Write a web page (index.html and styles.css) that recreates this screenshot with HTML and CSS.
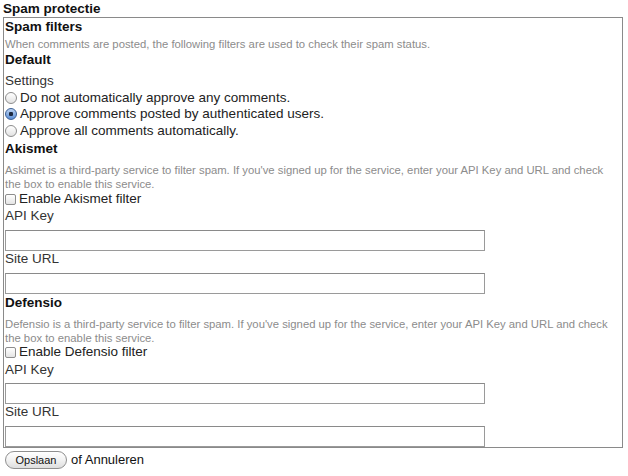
FILE: index.html
```html
<!DOCTYPE html>
<html>
<head>
<meta charset="utf-8">
<link rel="stylesheet" href="styles.css">
</head>
<body>
<div class="page">
  <div class="title">Spam protectie</div>
  <div class="box">
    <h3 class="heading">Spam filters</h3>
    <p class="desc desc-first">When comments are posted, the following filters are used to check their spam status.</p>
    <h3 class="heading">Default</h3>
    <div class="label label-settings">Settings</div>
    <label class="opt"><input type="radio" name="mode" class="radio"><span>Do not automatically approve any comments.</span></label>
    <label class="opt"><input type="radio" name="mode" class="radio" checked><span>Approve comments posted by authenticated users.</span></label>
    <label class="opt"><input type="radio" name="mode" class="radio"><span>Approve all comments automatically.</span></label>

    <h3 class="heading section-head">Akismet</h3>
    <p class="desc">Askimet is a third-party service to filter spam. If you've signed up for the service, enter your API Key and URL and check<br>the box to enable this service.</p>
    <label class="check"><input type="checkbox" class="cb"><span>Enable Akismet filter</span></label>
    <div class="label label-key">API Key</div>
    <input type="text" class="field field-first">
    <div class="label">Site URL</div>
    <input type="text" class="field">

    <h3 class="heading">Defensio</h3>
    <p class="desc">Defensio is a third-party service to filter spam. If you've signed up for the service, enter your API Key and URL and check<br>the box to enable this service.</p>
    <label class="check"><input type="checkbox" class="cb"><span>Enable Defensio filter</span></label>
    <div class="label label-key">API Key</div>
    <input type="text" class="field field-first">
    <div class="label">Site URL</div>
    <input type="text" class="field">
  </div>
  <div class="actions"><button type="button" class="btn">Opslaan</button><span class="or">of Annuleren</span></div>
</div>
</body>
</html>
```

FILE: styles.css
```css
html, body {
  margin: 0;
  padding: 0;
  background: #ffffff;
}
body {
  font-family: "Liberation Sans", Arial, Helvetica, sans-serif;
  font-size: 13.5px;
  color: #333333;
}
.page {
  padding: 0 5px 0 3px;
}
.title {
  font-weight: bold;
  font-size: 13.5px;
  line-height: 17px;
  color: #111111;
}
.box {
  border: 1px solid #8a8a8a;
  padding: 0 1px;
  display: flex;
  flex-direction: column;
  align-items: flex-start;
}
.heading {
  margin: 0;
  font-size: 13.5px;
  font-weight: bold;
  line-height: 18px;
  color: #111111;
}
.section-head {
  margin-top: 1.5px;
}
.desc {
  margin: 5px 0 0 0;
  font-size: 11.3px;
  line-height: 14px;
  color: #8c8c8c;
  max-width: 616px;
}
.desc-first {
  margin-top: 1px;
}
.label {
  line-height: 16px;
  color: #333333;
}
.label-settings {
  margin-top: 4px;
}
.label-key {
  margin-top: 3px;
}
.opt {
  display: flex;
  align-items: center;
  height: 16.5px;
  color: #222222;
}
.opt span {
  margin-left: 3px;
}
.radio {
  appearance: none;
  -webkit-appearance: none;
  margin: 1px 0 0 0;
  width: 12px;
  height: 12px;
  border-radius: 50%;
  border: 1px solid #8d8d8d;
  background: linear-gradient(#ffffff, #e2e2e2);
  box-sizing: border-box;
  flex: none;
}
.radio:checked {
  border-color: #3a5f95;
  background: radial-gradient(circle at 50% 50%, #1d2a40 0, #1d2a40 2px, transparent 2.4px),
              linear-gradient(#bcd3f2, #5d8fd6);
}
.check {
  display: flex;
  align-items: center;
  height: 14px;
  color: #222222;
}
.check span {
  margin-left: 3px;
}
.cb {
  appearance: none;
  -webkit-appearance: none;
  margin: 2px 0 0 0;
  width: 11px;
  height: 11px;
  border: 1px solid #8d8d8d;
  border-radius: 2px;
  background: linear-gradient(#ffffff, #e4e4e4);
  box-sizing: border-box;
  flex: none;
}
.field {
  display: block;
  width: 480px;
  height: 21px;
  box-sizing: border-box;
  border: 1px solid #9a9a9a;
  border-top-color: #8a8a8a;
  margin: 6px 0 0 0;
  padding: 0 2px;
  background: #ffffff;
  font: 13px "Liberation Sans", Arial, sans-serif;
}
.field-first {
  margin-top: 5.5px;
}
.actions {
  display: flex;
  align-items: center;
  margin-top: 2.5px;
  padding-left: 2px;
}
.btn {
  height: 18px;
  width: 62px;
  padding: 0;
  border: 1px solid #8f8f8f;
  border-radius: 9px;
  background: linear-gradient(#ffffff, #f2f2f2 50%, #dedede);
  font: 11px "Liberation Sans", Arial, sans-serif;
  color: #111111;
}
.or {
  margin-left: 4px;
  font-size: 13px;
  color: #111111;
}
```
